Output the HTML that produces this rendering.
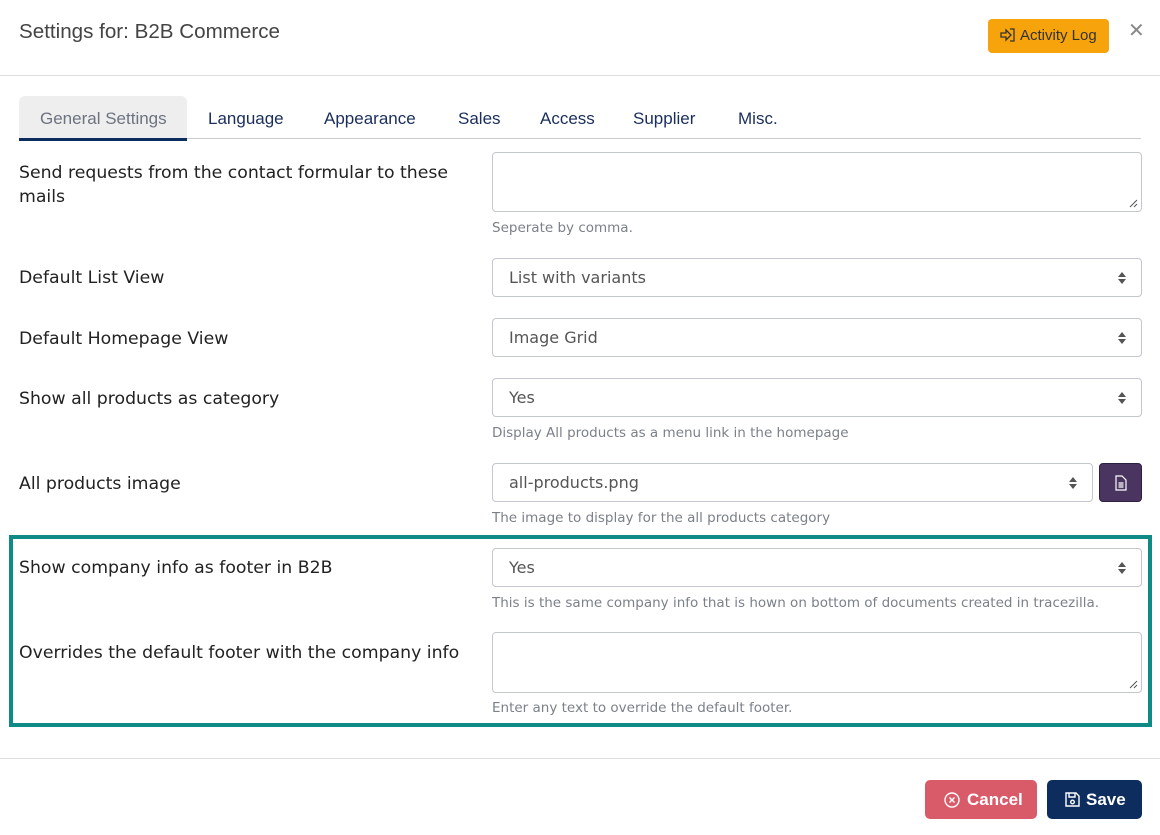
<!DOCTYPE html>
<html><head><meta charset="utf-8"><style>
*{box-sizing:border-box;margin:0;padding:0}
body{width:1160px;height:835px;background:#fff;font-family:"Liberation Sans",sans-serif;color:#212529;position:relative;overflow:hidden}
.abs{position:absolute}
.title{left:19px;top:20px;font-size:20.6px;color:#444}
.act{left:988px;top:19px;width:121px;height:34px;background:#f6a30c;border-radius:4px;font-size:15px;color:#333;line-height:34px;padding-left:12px}
.x{left:1128px;top:18px;font-size:20px;color:#888}
.hr{left:0;width:1160px;height:1px;background:#dcdde0}
.tab{top:96px;height:45px;line-height:45px;font-size:17px;color:#1a2e5c}
.lbl{left:19px;font-family:"DejaVu Sans",sans-serif;font-size:17.3px;color:#222;line-height:24px;margin-top:1px}
.inp{left:492px;width:650px;border:1px solid #c3c6cc;border-radius:4px;background:#fff;font-family:"DejaVu Sans",sans-serif;font-size:16px;color:#555;padding-left:16px}
.sel{height:39px;line-height:37px}
.help{left:492px;font-family:"DejaVu Sans",sans-serif;font-size:13.5px;color:#7b8089;margin-top:1px}
.arr{position:absolute;right:14px;top:13px;width:10px}
.grip{position:absolute;right:3px;bottom:3px;width:9px;height:9px}
</style></head><body>
<div class="abs title">Settings for: B2B Commerce</div>
<div class="abs act"><svg width="16" height="14" viewBox="0 0 16 14" style="vertical-align:-2px;margin-right:4px" fill="none" stroke="#333" stroke-width="1.3"><path d="M1 5h5V2l5 5-5 5V9H1z"/><path d="M10 1h4v12h-4"/></svg>Activity Log</div>
<div class="abs x">✕</div>
<div class="abs hr" style="top:75px"></div>
<div class="abs" style="left:19px;top:96px;width:168px;height:45px;background:#eeeeee;border-radius:6px 6px 0 0"></div>
<div class="abs" style="left:19px;top:138px;width:1122px;height:1px;background:#c8cad0"></div>
<div class="abs" style="left:19px;top:138px;width:168px;height:3px;background:#0d2d5e"></div>
<div class="abs tab" style="left:40px;color:#6c7380">General Settings</div>
<div class="abs tab" style="left:208px">Language</div>
<div class="abs tab" style="left:324px">Appearance</div>
<div class="abs tab" style="left:458px">Sales</div>
<div class="abs tab" style="left:540px">Access</div>
<div class="abs tab" style="left:633px">Supplier</div>
<div class="abs tab" style="left:738px">Misc.</div>

<div class="abs lbl" style="top:160px">Send requests from the contact formular to these<br>mails</div>
<div class="abs inp" style="top:152px;height:60px"><svg class="grip" viewBox="0 0 9 9" stroke="#555"><path d="M1 8L8 1M5 8L8 5"/></svg></div>
<div class="abs help" style="top:219px">Seperate by comma.</div>

<div class="abs lbl" style="top:265px">Default List View</div>
<div class="abs inp sel" style="top:258px">List with variants<svg class="arr" viewBox="0 0 10 12"><path d="M5 0l4 5H1zM5 12l4-5H1z" fill="#555"/></svg></div>

<div class="abs lbl" style="top:326px">Default Homepage View</div>
<div class="abs inp sel" style="top:318px">Image Grid<svg class="arr" viewBox="0 0 10 12"><path d="M5 0l4 5H1zM5 12l4-5H1z" fill="#555"/></svg></div>

<div class="abs lbl" style="top:386px">Show all products as category</div>
<div class="abs inp sel" style="top:378px">Yes<svg class="arr" viewBox="0 0 10 12"><path d="M5 0l4 5H1zM5 12l4-5H1z" fill="#555"/></svg></div>
<div class="abs help" style="top:424px">Display All products as a menu link in the homepage</div>

<div class="abs lbl" style="top:471px">All products image</div>
<div class="abs inp sel" style="top:463px;width:601px">all-products.png<svg class="arr" viewBox="0 0 10 12"><path d="M5 0l4 5H1zM5 12l4-5H1z" fill="#555"/></svg></div>
<div class="abs" style="left:1099px;top:463px;width:43px;height:39px;background:#4a3560;border-radius:4px;border:1px solid #2e2140"><svg width="12" height="16" viewBox="0 0 12 16" style="position:absolute;left:15px;top:11px" fill="none" stroke="#fff" stroke-width="1.2"><path d="M1 1h6l4 4v10H1z"/><path d="M3.5 8h5M3.5 10h5M3.5 12h5"/></svg></div>
<div class="abs help" style="top:509px">The image to display for the all products category</div>

<div class="abs" style="left:9px;top:535px;width:1143px;height:192px;border:4px solid #0f8a85"></div>
<div class="abs lbl" style="top:555px">Show company info as footer in B2B</div>
<div class="abs inp sel" style="top:548px">Yes<svg class="arr" viewBox="0 0 10 12"><path d="M5 0l4 5H1zM5 12l4-5H1z" fill="#555"/></svg></div>
<div class="abs help" style="top:594px">This is the same company info that is hown on bottom of documents created in tracezilla.</div>
<div class="abs lbl" style="top:640px">Overrides the default footer with the company info</div>
<div class="abs inp" style="top:632px;height:61px"><svg class="grip" viewBox="0 0 9 9" stroke="#555"><path d="M1 8L8 1M5 8L8 5"/></svg></div>
<div class="abs help" style="top:699px">Enter any text to override the default footer.</div>

<div class="abs hr" style="top:758px"></div>
<div class="abs" style="left:925px;top:780px;width:112px;height:39px;background:#d95b6a;border-radius:5px;color:#fff;font-size:17px;font-weight:bold;display:flex;align-items:center;padding-left:19px"><svg width="16" height="16" viewBox="0 0 16 16" style="margin-right:7px" fill="none" stroke="#fff" stroke-width="1.4"><circle cx="8" cy="8" r="7"/><path d="M5.5 5.5l5 5M10.5 5.5l-5 5"/></svg>Cancel</div>
<div class="abs" style="left:1047px;top:780px;width:95px;height:39px;background:#0d2d5e;border-radius:5px;color:#fff;font-size:17px;font-weight:bold;display:flex;align-items:center;padding-left:18px"><svg width="15" height="15" viewBox="0 0 15 15" style="margin-right:6px" fill="none" stroke="#fff" stroke-width="1.4"><path d="M1 1h10l3 3v10H1z"/><path d="M4 1v4h6V1"/><circle cx="7.5" cy="10" r="1.8"/></svg>Save</div>
</body></html>
